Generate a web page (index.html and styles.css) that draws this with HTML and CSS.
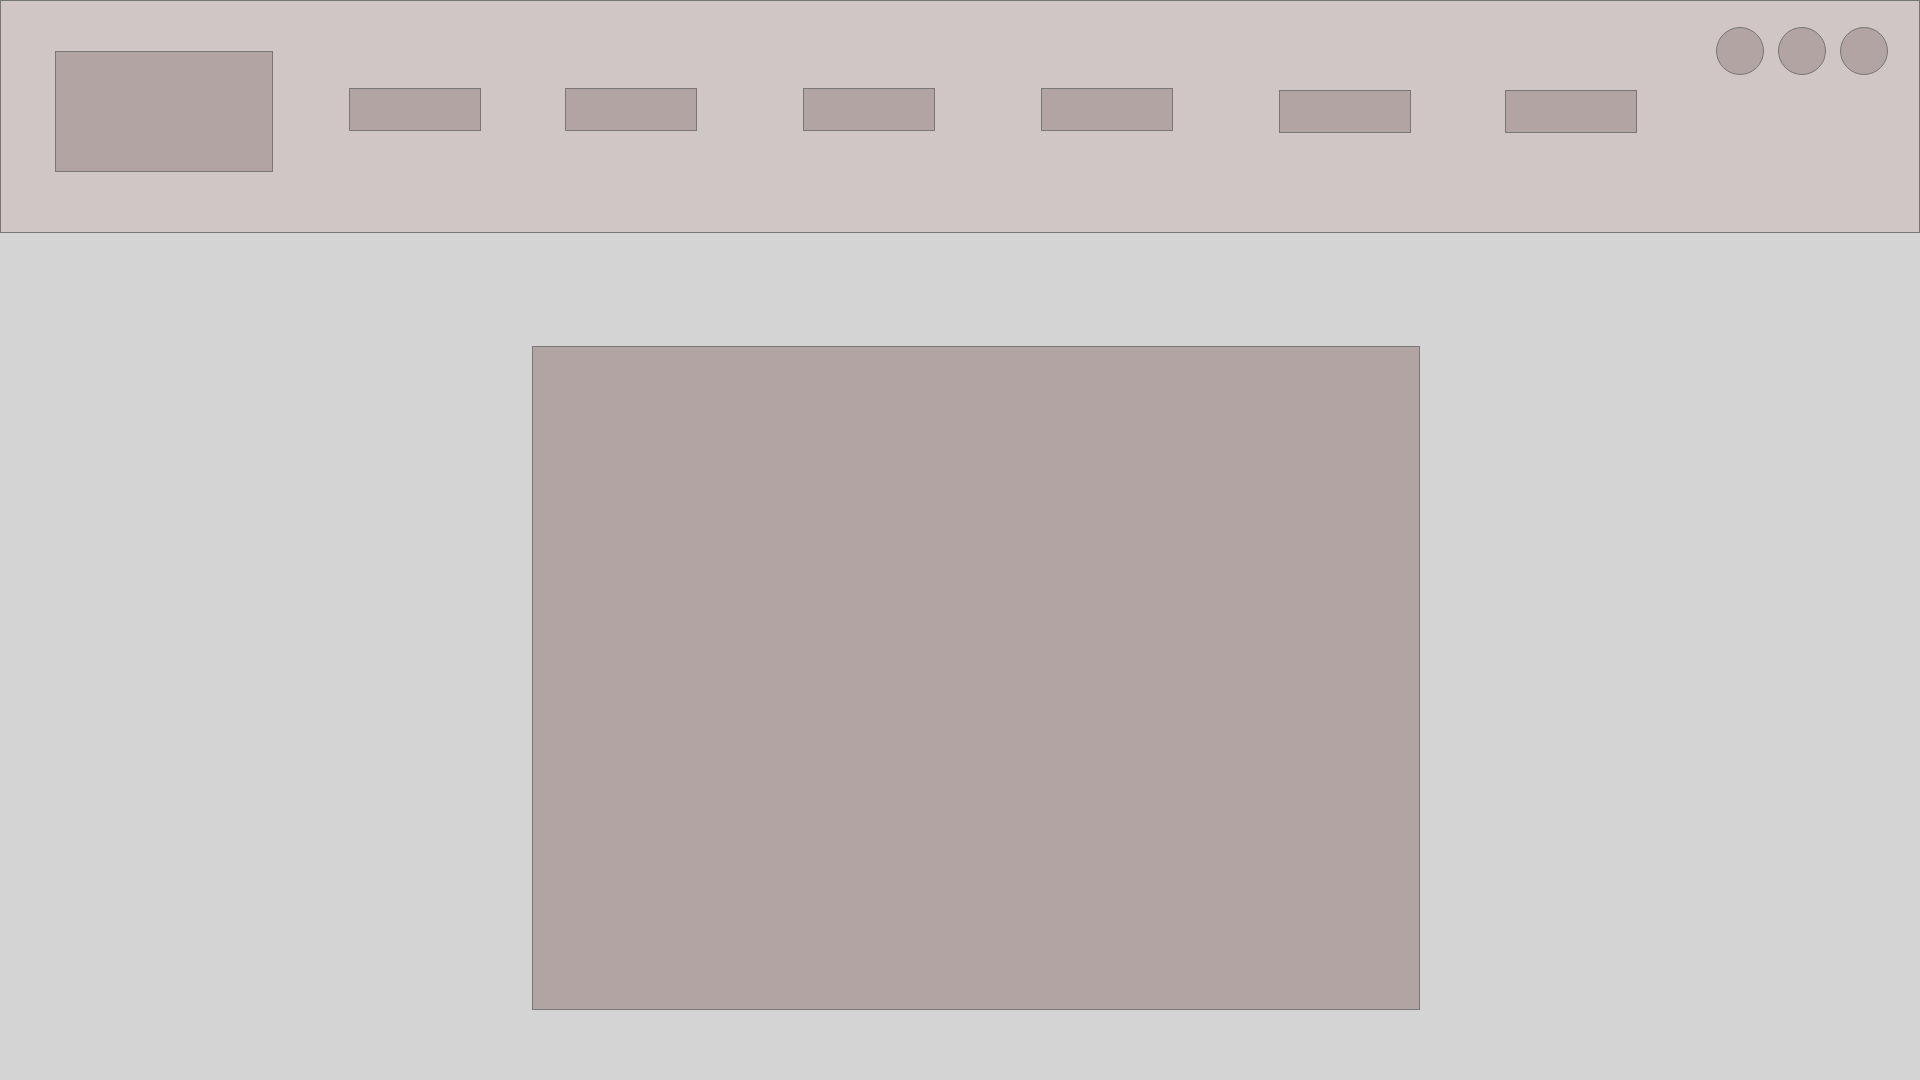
FILE: index.html
```html
<!DOCTYPE html>
<html>
<head>
<meta charset="utf-8">
<link rel="stylesheet" href="styles.css">
</head>
<body>
<header class="header">
  <div class="logo"></div>
  <nav class="nav">
    <div class="nav-item n1"></div>
    <div class="nav-item n2"></div>
    <div class="nav-item n3"></div>
    <div class="nav-item n4"></div>
    <div class="nav-item n5 low"></div>
    <div class="nav-item n6 low"></div>
  </nav>
  <div class="icons">
    <div class="icon"></div>
    <div class="icon"></div>
    <div class="icon"></div>
  </div>
</header>
<main class="main">
  <div class="content"></div>
</main>
</body>
</html>
```
FILE: styles.css
```css
html, body {
  margin: 0;
  padding: 0;
  background: #d4d4d4;
  width: 1920px;
  height: 1080px;
  overflow: hidden;
  font-family: "Liberation Sans", Arial, sans-serif;
}
* { box-sizing: border-box; }

.header {
  height: 233px;
  width: 1920px;
  background: #cfc6c5;
  border: 1px solid #777;
  display: flex;
  align-items: flex-start;
}
.logo {
  width: 218px;
  height: 121px;
  margin-left: 54px;
  margin-top: 50px;
  background: #b1a4a3;
  border: 1px solid #777;
  flex: none;
}
.nav {
  display: flex;
  align-items: flex-start;
  margin-top: 87px;
}
.nav-item {
  width: 132px;
  height: 43px;
  background: #b1a4a3;
  border: 1px solid #777;
  flex: none;
}
.n1 { margin-left: 76px; }
.n2 { margin-left: 84px; }
.n3, .n4, .n5 { margin-left: 106px; }
.n6 { margin-left: 94px; }
.low { margin-top: 2px; }

.icons {
  display: flex;
  gap: 14px;
  margin-left: 79px;
  margin-top: 26px;
}
.icon {
  width: 48px;
  height: 48px;
  border-radius: 50%;
  background: #b1a4a3;
  border: 1px solid #777;
}

.main {
  padding-top: 113px;
  padding-left: 532px;
}
.content {
  width: 888px;
  height: 664px;
  background: #b1a4a3;
  border: 1px solid #777;
}
```
